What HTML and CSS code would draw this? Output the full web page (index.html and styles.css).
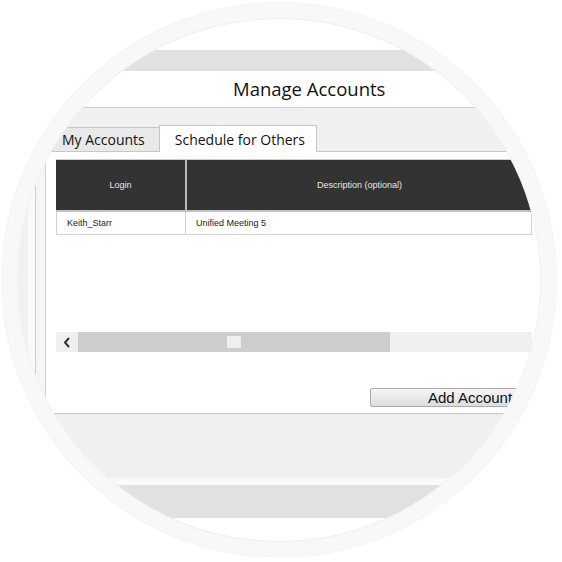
FILE: index.html
```html
<!DOCTYPE html>
<html lang="en">
<head>
  <meta charset="UTF-8" />
  <title>Manage Accounts</title>
  <link rel="stylesheet" href="styles.css">
</head>
<body>

  <div class="lens">
    <div class="glass">
      <div class="screen">
        <div class="top-space"></div>
        <div class="band"></div>
        <h1 class="title">Manage Accounts</h1>

        <div class="dialog">
          <div class="tabs">
            <div class="tab">My Accounts</div>
            <div class="tab active">Schedule for Others</div>
          </div>

          <div class="panel">
            <div class="page">
              <div class="frame">
                <div class="grid">
                  <div class="grid-head">
                    <div class="col-login">Login</div>
                    <div class="col-desc">Description (optional)</div>
                  </div>
                  <div class="grid-row">
                    <div class="col-login">Keith_Starr</div>
                    <div class="col-desc">Unified Meeting 5</div>
                  </div>
                </div>

                <div class="hscroll">
                  <div class="sb-btn">
                    <svg width="8" height="11" viewBox="0 0 8 11"><polyline points="6,1 2,5.5 6,10" fill="none" stroke="#333" stroke-width="2"/></svg>
                  </div>
                  <div class="sb-thumb"><span class="grip"></span></div>
                  <div class="sb-track"></div>
                </div>

                <button class="add-btn">Add Account</button>
              </div>
            </div>
          </div>
        </div>

        <div class="strip"></div>
        <div class="band band-low"></div>
      </div>
    </div>
  </div>

</body>
</html>
```

FILE: styles.css
```css
body {
  margin: 0;
  padding: 3px 0 0 2px;
  background: #ffffff;
  font-family: 'Open Sans', sans-serif;
}

/* round frame around the screenshot */
.lens {
  width: 554px;
  height: 554px;
  box-sizing: border-box;
  padding: 16px;
  border-radius: 50%;
  background: #f8f8f8;
  box-shadow: 0 0 2px rgba(0, 0, 0, 0.12);
}

.glass {
  width: 522px;
  height: 522px;
  border-radius: 50%;
  overflow: hidden;
  background: #ffffff;
  box-shadow: 0 0 2px rgba(0, 0, 0, 0.12);
}

.screen {
  width: 620px;
}

.top-space {
  height: 31px;
}

.band {
  height: 21px;
  background: #e1e1e1;
}

.title {
  margin: 0;
  padding: 6px 0 6px 215px;
  font-size: 18.5px;
  font-weight: 400;
  line-height: 24px;
  color: #111111;
  background: #ffffff;
  border-bottom: 1px solid #d0d0d0;
}

.dialog {
  background: #f0f0f0;
  padding: 0 0 64px 10px;
}

.tabs {
  display: flex;
  align-items: flex-end;
  padding: 17px 0 0 24px;
}

.tab {
  font-size: 14px;
  line-height: 19px;
  color: #111111;
  background: #e9e9e9;
  border: 1px solid #c6c6c6;
  border-bottom: none;
  padding: 2px 14px 2px 9px;
}

.tab.active {
  position: relative;
  z-index: 1;
  background: #ffffff;
  margin: 0 0 -1px -1px;
  padding: 4px 11px 3px 15px;
}

.panel {
  background: #fafafa;
  border-top: 1px solid #c6c6c6;
  border-bottom: 1px solid #c6c6c6;
  padding-left: 7px;
}

.page {
  background: #f5f5f5;
  border-left: 1px solid #cfcfcf;
  padding-left: 9px;
}

.frame {
  background: #ffffff;
  border-left: 1px solid #cfcfcf;
  padding: 7px 0 6px 10px;
}

.grid {
  width: 476px;
  border-top: 1px solid #cfcfcf;
  font-family: 'Liberation Sans', Arial, sans-serif;
  font-size: 9px;
}

.grid-head {
  display: flex;
  height: 50px;
  background: #333333;
  color: #e6e6e6;
  border-bottom: 2px solid #c2c2c2;
}

.grid-head div {
  display: flex;
  align-items: center;
  justify-content: center;
}

.grid-head .col-login {
  width: 129px;
  border-right: 2px solid #b8b8b8;
}

.grid-head .col-desc {
  flex: 1;
}

.grid-row {
  display: flex;
  height: 22px;
  line-height: 22px;
  color: #1a1a1a;
  border-left: 1px solid #d2d2d2;
  border-right: 1px solid #d2d2d2;
  border-bottom: 1px solid #d2d2d2;
}

.grid-row .col-login {
  width: 118px;
  padding-left: 10px;
  border-right: 1px solid #d2d2d2;
}

.grid-row .col-desc {
  flex: 1;
  padding-left: 10px;
}

.hscroll {
  display: flex;
  width: 476px;
  height: 20px;
  margin-top: 97px;
}

.sb-btn {
  width: 22px;
  background: #f0f0f0;
  display: flex;
  align-items: center;
  justify-content: center;
}

.sb-thumb {
  width: 312px;
  background: #cdcdcd;
  display: flex;
  align-items: center;
  justify-content: center;
}

.grip {
  width: 14px;
  height: 12px;
  background: #efefef;
}

.sb-track {
  flex: 1;
  background: #f0f0f0;
}

.add-btn {
  display: block;
  width: 200px;
  height: 19px;
  margin: 36px 0 0 314px;
  padding: 0;
  font-family: 'Liberation Sans', Arial, sans-serif;
  font-size: 15px;
  line-height: 17px;
  color: #111111;
  text-align: center;
  background: linear-gradient(#f6f6f6, #dddddd);
  border: 1px solid #aaaaaa;
  border-radius: 2px;
}

.strip {
  height: 7px;
  background: #fafafa;
}

.band-low {
  height: 33px;
}
```
